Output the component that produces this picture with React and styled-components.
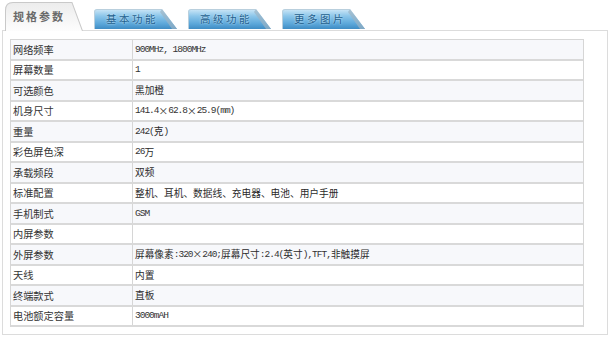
import React from 'react';
import styled, { createGlobalStyle } from 'styled-components';

const specs = [
  ['网络频率', '900MHz, 1800MHz'],
  ['屏幕数量', '1'],
  ['可选颜色', '黑加橙'],
  ['机身尺寸', '141.4×62.8×25.9(mm)'],
  ['重量', '242(克)'],
  ['彩色屏色深', '26万'],
  ['承载频段', '双频'],
  ['标准配置', '整机、耳机、数据线、充电器、电池、用户手册'],
  ['手机制式', 'GSM'],
  ['内屏参数', ''],
  ['外屏参数', '屏幕像素:320×240;屏幕尺寸:2.4(英寸),TFT,非触摸屏'],
  ['天线', '内置'],
  ['终端款式', '直板'],
  ['电池额定容量', '3000mAH']
];

const tabs = ['基本功能', '高级功能', '更多图片'];

// half-width ascii runs get a narrow mono face, everything else the CJK face
const runs = text => text.match(/[\x20-\x7e]+|[^\x20-\x7e]+/g) || [];

const ActiveShape = () => (
  <Shape viewBox="0 0 78 28" preserveAspectRatio="none">
    <defs>
      <linearGradient id="ag" x1="0" y1="0" x2="0" y2="1">
        <stop offset="0" stopColor="#ececec" />
        <stop offset="1" stopColor="#fdfdfd" />
      </linearGradient>
    </defs>
    <path d="M0.5 28 V8 Q0.5 0.5 8 0.5 H67 L77.5 28" fill="url(#ag)" stroke="#c9c9c9" />
  </Shape>
);

const BlueShape = () => (
  <Shape viewBox="0 0 83 20" preserveAspectRatio="none">
    <defs>
      <linearGradient id="bg" x1="0" y1="0" x2="0" y2="1">
        <stop offset="0" stopColor="#cfe8f7" />
        <stop offset="0.35" stopColor="#8cc6ea" />
        <stop offset="0.75" stopColor="#5aa6d9" />
        <stop offset="1" stopColor="#3f8cc4" />
      </linearGradient>
    </defs>
    <path d="M0 20 V3 Q0 0 3 0 H68 L83 20 Z" fill="url(#bg)" />
    <path d="M68 0 L83 20 H78 L66 3 Z" fill="#9bb3c4" opacity="0.7" />
    <path d="M0.5 20 V3 Q0.5 0.5 3 0.5 H68" fill="none" stroke="#b9cfdd" />
  </Shape>
);

export default function App() {
  return (
    <Page>
      <GlobalStyle />
      <TabBar>
        <ActiveTab>
          <ActiveShape />
          <TabLabel $active>规格参数</TabLabel>
        </ActiveTab>
        {tabs.map(t => (
          <BlueTab key={t}>
            <BlueShape />
            <TabLabel>{t}</TabLabel>
          </BlueTab>
        ))}
      </TabBar>
      <Panel>
        <Table>
          {specs.map(([k, v], i) => (
            <Row key={k} $odd={i % 2 === 0}>
              <Label>{k}</Label>
              <Value>
                {runs(v).map((r, j) =>
                  /^[\x20-\x7e]+$/.test(r) ? <Latin key={j}>{r}</Latin> : <span key={j}>{r}</span>
                )}
              </Value>
            </Row>
          ))}
        </Table>
      </Panel>
    </Page>
  );
}

const GlobalStyle = createGlobalStyle`
  body {
    margin: 0;
    background: #ffffff;
    font-family: "Noto Sans CJK SC", "Noto Sans", sans-serif;
  }
`;

const Page = styled.div`
  width: 610px;
  padding: 3px 2px 0 2px;
  box-sizing: border-box;
`;

const TabBar = styled.div`
  display: flex;
  align-items: flex-end;
  height: 28px;
  padding-left: 3px;
  gap: 11px;
  position: relative;
  z-index: 1;
  margin-bottom: -1px;
`;

const Shape = styled.svg`
  position: absolute;
  inset: 0;
  width: 100%;
  height: 100%;
`;

const ActiveTab = styled.div`
  position: relative;
  width: 78px;
  height: 29px;
  display: flex;
  align-items: center;
  padding-left: 8px;
  box-sizing: border-box;
`;

const BlueTab = styled.div`
  position: relative;
  width: 83px;
  height: 20px;
  margin-bottom: 2px;
  display: flex;
  align-items: center;
  padding-left: 12px;
  box-sizing: border-box;
`;

const TabLabel = styled.span`
  position: relative;
  font-size: ${p => (p.$active ? '11px' : '10.5px')};
  letter-spacing: ${p => (p.$active ? '2px' : '2.5px')};
  font-weight: ${p => (p.$active ? 700 : 400)};
  color: ${p => (p.$active ? '#6a6a6a' : '#225f8e')};
  text-shadow: ${p => (p.$active ? 'none' : '0 0 2px #d8eefa')};
  line-height: 1;
  margin-top: ${p => (p.$active ? '0' : '1px')};
`;

const Panel = styled.div`
  border: 1px solid #dcdcdc;
  height: 305px;
  box-sizing: border-box;
  padding: 8px 23px 0 7px;
  background: #ffffff;
`;

const Table = styled.div`
  border-top: 1px solid #d6d6d6;
  border-left: 1px solid #d6d6d6;
  border-right: 1px solid #d6d6d6;
`;

const Row = styled.div`
  display: grid;
  grid-template-columns: 122px 1fr;
  height: 20.5px;
  box-sizing: border-box;
  border-bottom: 2px solid #d9d9d9;
  background: ${p => (p.$odd ? '#f7f8fb' : '#ffffff')};
  color: #333333;
`;

const Label = styled.div`
  display: flex;
  align-items: center;
  padding-left: 2px;
  border-right: 1px solid #d6d6d6;
  font-size: 10.2px;
  font-family: "Noto Sans CJK SC", sans-serif;
`;

const Value = styled.div`
  display: flex;
  align-items: center;
  padding-left: 2px;
  font-size: 9.7px;
  font-family: "Noto Sans CJK SC", sans-serif;
  color: #2a2a2a;
  white-space: pre;
`;

const Latin = styled.span`
  font-family: "Liberation Mono", monospace;
  font-size: 9.5px;
  letter-spacing: -1px;
  color: #333333;
`;
